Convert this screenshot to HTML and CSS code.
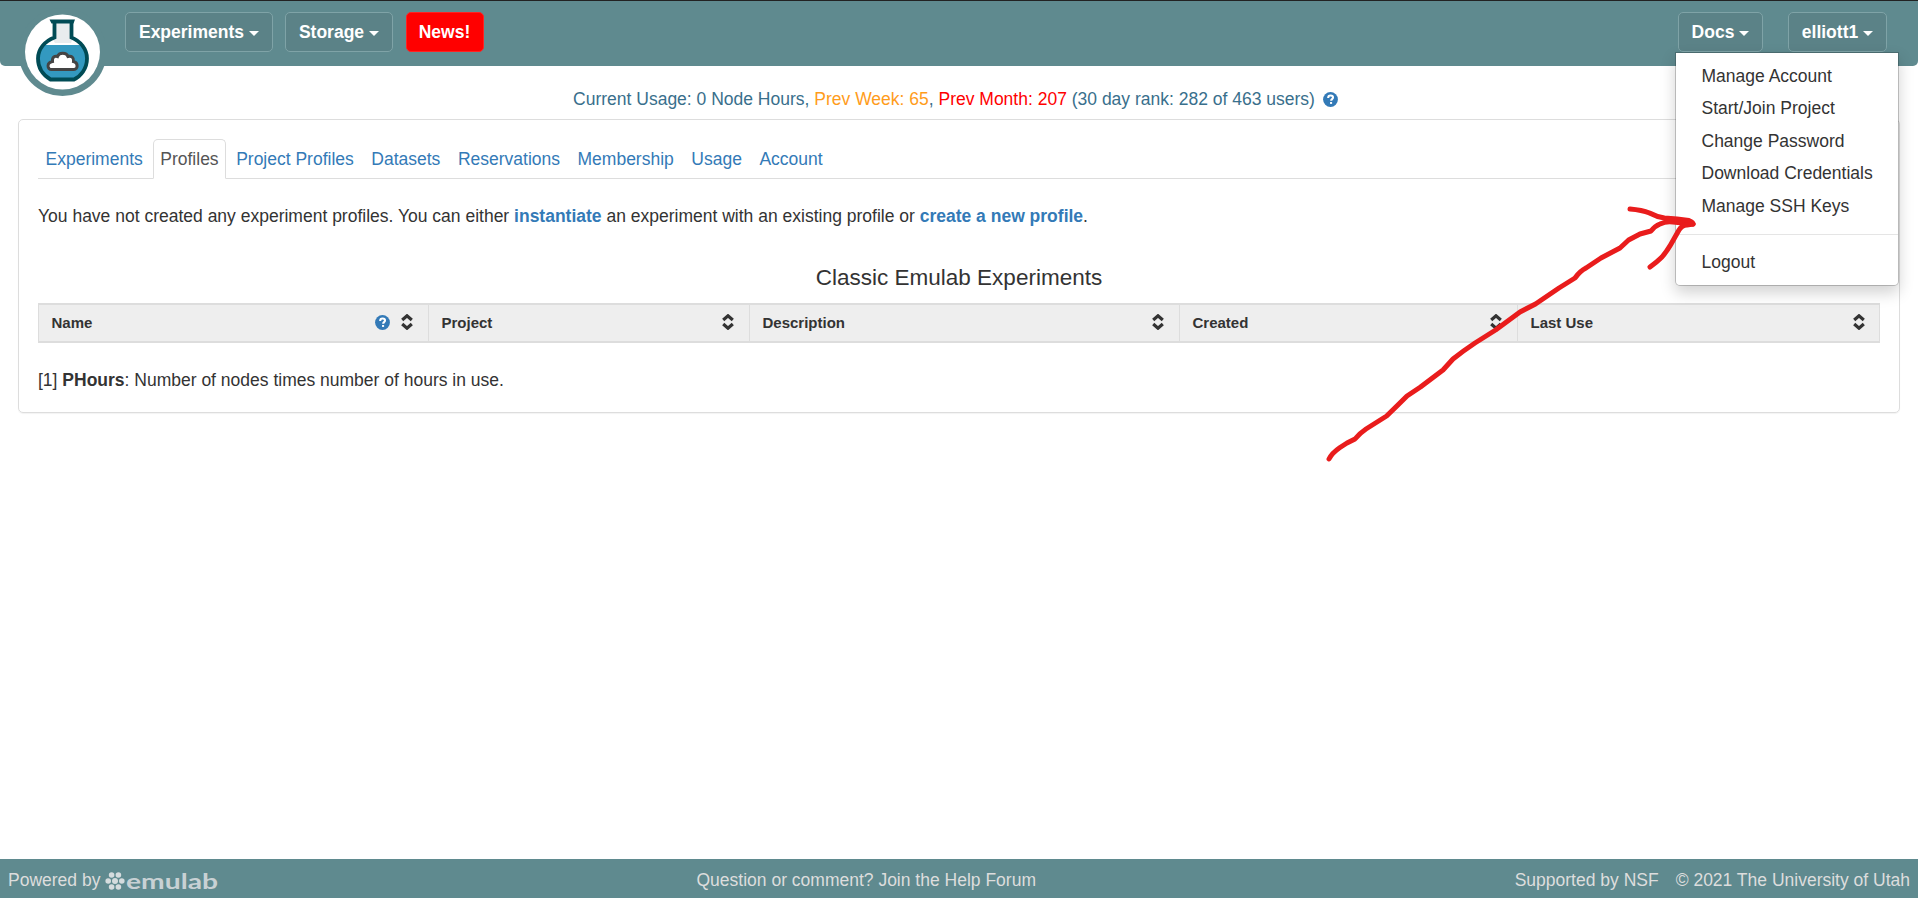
FILE: index.html
```html
<!DOCTYPE html>
<html lang="en">
<head>
<meta charset="utf-8">
<title>Emulab - Profiles</title>
<link rel="stylesheet" href="styles.css">
</head>
<body>
<svg class="defs" width="0" height="0" aria-hidden="true">
  <symbol id="sort" viewBox="0 0 12 16"><path d="M1.200 6 6 1.800l4.800 4.200M1.200 10 6 14.200l4.800-4.200" fill="none" stroke="#333" stroke-width="3.200"/></symbol>
  <symbol id="help" viewBox="0 0 16 16"><circle cx="8" cy="8" r="7.900" fill="#337ab7"/><path d="M5.500 6.300C5.500 4.600 6.500 3.700 8.100 3.700s2.600.9 2.600 2.200c0 1.700-2 1.700-2 3.300" fill="none" stroke="#fff" stroke-width="2.200"/><path d="M7.500 10.700h2.200v2H7.500z" fill="#fff"/></symbol>
</svg>
<header class="navbar">
  <a class="logo" href="#">
    <svg width="85" height="96" viewBox="0 0 85 96">
      <circle cx="42.500" cy="52" r="44" fill="#5f8a8f"/>
      <circle cx="42.500" cy="52" r="37.500" fill="#fff"/>
      <path d="M33 23h20v15l-2 5h-16l-3-5z" fill="#e8ecee"/>
      <path d="M23 45h39l5 8v11c-1 7-5 11-12 15H31c-7-4-12-9-13-17 0-7 2-12 5-17z" fill="#3399c0"/>
      <path d="M34.500 22v15.500C24.500 41 18 49.500 18 58.500c0 9 5 16.500 12.500 21h23.500C61 76 67 68.500 67 58.500c0-9-6.500-17.500-15.500-21V22" fill="none" stroke="#004b55" stroke-width="3.800"/>
      <path d="M29.500 19.500h25.500l-1.500 4H31.500z" fill="#004b55"/>
      <path d="M31.500 69.500c-4.500 0-5-7 1-8-.5-4.500 2.500-6 5-5 1.500-4.500 9-4.500 10.500 0 3.500-1 6 1 5.500 5 5 1 4.500 8 .5 8z" fill="#fff" stroke="#444" stroke-width="3"/>
    </svg>
  </a>
  <nav class="nav-left">
    <a class="btn btn-experiments">Experiments<i class="caret"></i></a>
    <a class="btn btn-storage">Storage<i class="caret"></i></a>
    <a class="btn btn-news">News!</a>
  </nav>
  <nav class="nav-right">
    <a class="btn btn-docs">Docs<i class="caret"></i></a>
    <div class="user">
      <a class="btn btn-user">elliott1<i class="caret"></i></a>
      <ul class="menu">
        <li>Manage Account</li>
        <li>Start/Join Project</li>
        <li>Change Password</li>
        <li>Download Credentials</li>
        <li>Manage SSH Keys</li>
        <li class="divider"></li>
        <li class="logout">Logout</li>
      </ul>
    </div>
  </nav>
</header>
<p class="usage"><span>Current Usage: 0 Node Hours, <span class="week">Prev Week: 65</span>, <span class="month">Prev Month: 207</span> (30 day rank: 282 of 463 users)</span><svg width="15" height="15"><use href="#help"/></svg></p>
<main class="panel">
  <ul class="tabs">
    <li>Experiments</li><li class="active">Profiles</li><li>Project Profiles</li><li>Datasets</li><li>Reservations</li><li>Membership</li><li>Usage</li><li>Account</li>
  </ul>
  <p class="message">You have not created any experiment profiles. You can either <a>instantiate</a> an experiment with an existing profile or <a>create a new profile</a>.</p>
  <h4>Classic Emulab Experiments</h4>
  <div class="table">
    <div class="th">Name<span class="icons"><svg width="15" height="15"><use href="#help"/></svg><svg width="12" height="16"><use href="#sort"/></svg></span></div>
    <div class="th">Project<svg width="12" height="16"><use href="#sort"/></svg></div>
    <div class="th">Description<svg width="12" height="16"><use href="#sort"/></svg></div>
    <div class="th">Created<svg width="12" height="16"><use href="#sort"/></svg></div>
    <div class="th last">Last Use<svg width="12" height="16"><use href="#sort"/></svg></div>
  </div>
  <p class="note">[1] <b>PHours</b>: Number of nodes times number of hours in use.</p>
</main>
<footer>
  <div class="powered">Powered by
    <svg width="115" height="26" viewBox="0 0 115 26">
      <g fill="#d5dcde"><circle cx="10" cy="11" r="3"/><circle cx="3.200" cy="11" r="2.800"/><circle cx="16.800" cy="11" r="2.800"/><circle cx="6.600" cy="5" r="2.800"/><circle cx="13.400" cy="5" r="2.800"/><circle cx="6.600" cy="17" r="2.800"/><circle cx="13.400" cy="17" r="2.800"/></g>
      <text class="wordmark" x="21" y="19" textLength="92" lengthAdjust="spacingAndGlyphs">emulab</text>
    </svg>
  </div>
  <div>Question or comment? Join the Help Forum</div>
  <div class="legal"><span>Supported by NSF</span><span>© 2021 The University of Utah</span></div>
</footer>
<svg class="arrow" width="374" height="260" viewBox="1325 204 374 260">
  <path d="M1329 459Q1332 453 1340 447.500L1347 443 1355 439Q1360 433 1366 429L1386.600 416Q1397 406 1407 396L1420.500 387 1443 370 1453 359Q1463 351 1475 343L1495.600 330 1520 312 1535.500 304 1559 288 1575 278Q1580 271 1586 268L1601 258 1620 248 1628.600 240 1640 234 1651 231Q1655 226 1660 224 1666 221 1673 222L1693 224"/>
  <path d="M1630 209Q1642 210 1649.500 213 1657 217 1664.500 218L1677 219 1689 220.500Q1693 222 1693 224"/>
  <path d="M1650 267Q1657 262 1662 257 1667 251 1670.500 245L1679 230Q1682 225 1687 225L1693 224"/>
</svg>
</body>
</html>
```
FILE: styles.css
```css
* { box-sizing: border-box; }
body {
  margin: 0;
  height: 898px;
  overflow: hidden;
  display: flex;
  flex-direction: column;
  font: 17.5px/25px "Liberation Sans", Arial, sans-serif;
  color: #333;
  background: #fff;
}
p, ul, h4 { margin: 0; padding: 0; }
ul { list-style: none; }
.defs { position: absolute; }
.navbar {
  height: 66px;
  flex: none;
  display: flex;
  align-items: flex-start;
  border-top: 1px solid #222;
  border-radius: 0 0 5px 5px;
  background: #5f8a8f;
}
.logo { width: 85px; height: 65px; margin-left: 20px; }
.logo svg { display: block; margin-top: -1px; }
.nav-left { display: flex; margin: 11px 0 0 20px; gap: 12px; }
.nav-right { display: flex; margin: 11px 31px 0 auto; gap: 25px; }
.btn {
  height: 40px;
  display: flex;
  align-items: center;
  justify-content: center;
  padding-top: 1px;
  border: 1px solid #7fa3a7;
  border-radius: 5px;
  background: #5b8287;
  color: #fff;
  font-weight: bold;
}
.btn-experiments { width: 148px; }
.btn-storage { width: 108px; }
.btn-news { width: 78px; margin-left: 0.500px; background: #f00; border-color: #f22; }
.btn-docs { width: 85px; }
.btn-user { width: 99px; }
.caret {
  margin: 1px 0 0 5px;
  border: 5px solid transparent;
  border-top-color: #fff;
  border-bottom: 0;
}
.user { position: relative; }
.menu {
  position: absolute;
  z-index: 2;
  top: 40px;
  right: -12px;
  width: 224px;
  height: 234px;
  padding: 7px 0;
  background: #fff;
  background-clip: padding-box;
  border: 1px solid rgba(0,0,0,.2);
  border-radius: 0 0 5px 5px;
  box-shadow: 0 7px 15px rgba(0,0,0,.175);
}
.menu li { height: 32.5px; padding: 3.500px 0 0 25.500px; white-space: nowrap; }
.menu .divider { height: 1px; margin: 11px 0; padding: 0; background: #e5e5e5; }
.menu .logout { padding-top: 4.500px; }
.usage {
  display: flex;
  justify-content: center;
  align-items: center;
  gap: 8px;
  margin: 21px 7px 0 0;
  height: 25px;
  color: #396f8c;
}
.week { color: #ff9c1b; }
.month { color: #f00; }
.panel {
  height: 294px;
  margin: 7px 18px 0;
  padding: 19px 19px 0;
  border: 1px solid #ddd;
  border-radius: 5px;
  box-shadow: 0 1px 1px rgba(0,0,0,.05);
}
.tabs { display: flex; height: 40px; gap: 2.500px; border-bottom: 1px solid #ddd; }
.tabs li {
  height: 40px;
  padding: 6.500px 6.500px 0;
  border: 1px solid transparent;
  border-radius: 5px 5px 0 0;
  color: #337ab7;
}
.tabs .active { color: #555; background: #fff; border-color: #ddd #ddd #fff; }
.message { margin-top: 25px; }
.message a { color: #337ab7; font-weight: bold; }
h4 { margin-top: 36px; font-size: 22.500px; line-height: 25px; font-weight: normal; text-align: center; }
.table {
  display: grid;
  grid-template-columns: 390px 321px 430px 338px 1fr;
  height: 40px;
  margin-top: 13px;
  border: 1px solid #ddd;
  border-width: 2px 1px;
  background: #eee;
}
.th {
  display: flex;
  align-items: center;
  justify-content: space-between;
  padding: 0 15px 2px 12.500px;
  border-right: 1px solid #ddd;
  font-size: 15px;
  font-weight: bold;
}
.last { border: 0; padding-right: 14px; }
.icons { display: flex; align-items: center; gap: 11px; }
.note { margin-top: 25px; }
footer {
  display: grid;
  grid-template-columns: 688.5px auto 1fr;
  height: 39px;
  flex: none;
  margin-top: auto;
  padding: 9px 8px 0;
  background: #5f8a8f;
  color: #ddd;
}
.powered { display: flex; gap: 5px; }
.powered svg { margin-top: 2px; }
.wordmark { font: bold 21px Lato, sans-serif; fill: #c8d1d4; }
.legal { display: flex; justify-content: flex-end; gap: 17px; }
.arrow {
  position: absolute;
  z-index: 3;
  left: 1325px;
  top: 204px;
  fill: none;
  stroke: #e91c1c;
  stroke-width: 5;
  stroke-linecap: round;
  stroke-linejoin: round;
}
```
